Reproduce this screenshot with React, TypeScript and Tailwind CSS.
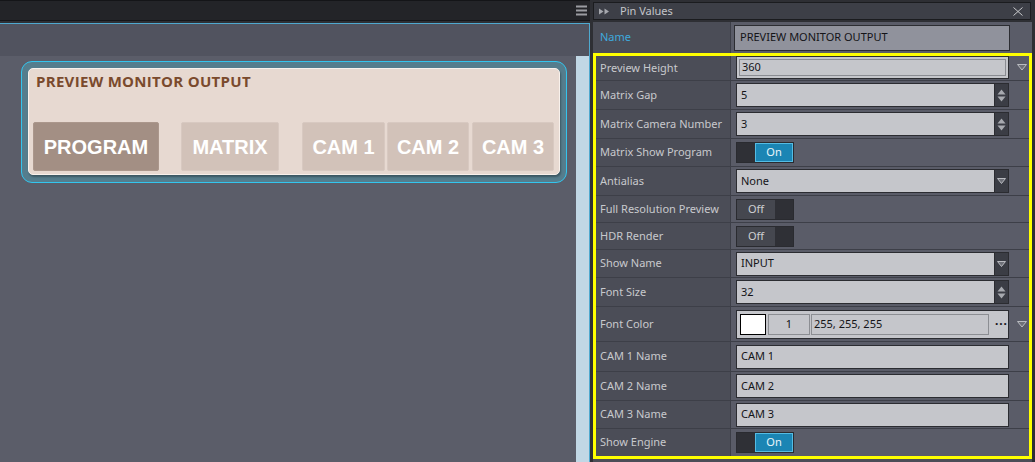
import React from "react";

type Row =
  | { label: string; h: string; kind: "combo" | "spin" | "select" | "text"; value: string }
  | { label: string; h: string; kind: "toggle"; on: boolean }
  | { label: string; h: string; kind: "color" };

const ROWS: Row[] = [
  { label: "Preview Height", h: "h-[25px]", kind: "combo", value: "360" },
  { label: "Matrix Gap", h: "h-[29px]", kind: "spin", value: "5" },
  { label: "Matrix Camera Number", h: "h-[29px]", kind: "spin", value: "3" },
  { label: "Matrix Show Program", h: "h-[28px]", kind: "toggle", on: true },
  { label: "Antialias", h: "h-[29px]", kind: "select", value: "None" },
  { label: "Full Resolution Preview", h: "h-[27px]", kind: "toggle", on: false },
  { label: "HDR Render", h: "h-[27px]", kind: "toggle", on: false },
  { label: "Show Name", h: "h-[28px]", kind: "select", value: "INPUT" },
  { label: "Font Size", h: "h-[29px]", kind: "spin", value: "32" },
  { label: "Font Color", h: "h-[35px]", kind: "color" },
  { label: "CAM 1 Name", h: "h-[30px]", kind: "text", value: "CAM 1" },
  { label: "CAM 2 Name", h: "h-[29px]", kind: "text", value: "CAM 2" },
  { label: "CAM 3 Name", h: "h-[28px]", kind: "text", value: "CAM 3" },
  { label: "Show Engine", h: "h-[27px]", kind: "toggle", on: true },
];

function DownArrow() {
  return (
    <svg width="10" height="7" viewBox="0 0 10 7">
      <polygon points="0.5,0.5 9.5,0.5 5,6" fill="#6e7078" stroke="#b9bbc0" />
    </svg>
  );
}

function SpinArrows() {
  return (
    <svg width="9" height="15" viewBox="0 0 9 15">
      <polygon points="0.5,6.5 4.5,1.5 8.5,6.5" fill="#a7a9af" />
      <polygon points="0.5,8.5 4.5,13.5 8.5,8.5" fill="#a7a9af" />
    </svg>
  );
}

function Toggle({ on }: { on: boolean }) {
  return (
    <div className="flex h-[21px] w-[58px] border border-[#2a2b30] text-[11px]">
      {on ? (
        <>
          <div className="w-[18px] bg-[#2f3036]" />
          <div className="flex flex-1 items-center justify-center border border-[#55bce4] bg-[#1b85b4] text-[#e9f5fb]">
            On
          </div>
        </>
      ) : (
        <>
          <div className="flex w-[38px] items-center justify-center bg-[#45474f] text-[#cfd0d3]">Off</div>
          <div className="flex-1 bg-[#2f3036]" />
        </>
      )}
    </div>
  );
}

function Value({ row }: { row: Row }) {
  const box = "flex h-[24px] w-[273px] items-center border border-[#2b2c31] bg-[#c5c6cb] text-[11px] text-[#141418]";
  if (row.kind === "toggle") return <Toggle on={row.on} />;
  if (row.kind === "color") {
    return (
      <div className="flex items-center">
        <div className="flex h-[29px] w-[273px] items-center border border-[#2b2c31] bg-[#c5c6cb] pl-[3px] text-[11px] text-[#141418]">
          <div className="h-[21px] w-[26px] border border-black bg-white" />
          <div className="ml-[2px] flex h-[21px] w-[42px] items-center justify-center border border-[#8c8e93]">1</div>
          <div className="ml-[1px] flex h-[21px] w-[178px] items-center border border-[#8c8e93] pl-[2px]">
            255, 255, 255
          </div>
          <div className="ml-[6px] text-[12px] font-bold leading-none tracking-[1px]">···</div>
        </div>
        <div className="ml-[8px] flex items-center">
          <DownArrow />
        </div>
      </div>
    );
  }
  if (row.kind === "combo") {
    return (
      <div className="flex items-center self-start">
        <div className="flex h-[23px] w-[273px] items-center border border-[#2b2c31] bg-[#c5c6cb] px-[2px]">
          <div className="flex h-[17px] w-full items-center border border-[#8a8c92] pl-[2px] text-[11px] text-[#141418]">
            {row.value}
          </div>
        </div>
        <div className="ml-[8px] flex items-center">
          <DownArrow />
        </div>
      </div>
    );
  }
  return (
    <div className={box}>
      <span className="flex-1 pl-[4px]">{row.value}</span>
      {row.kind === "spin" && (
        <div className="flex h-full w-[14px] items-center justify-center border-l border-[#2b2c31] bg-[#3b3d45]">
          <SpinArrows />
        </div>
      )}
      {row.kind === "select" && (
        <div className="flex h-full w-[14px] items-center justify-center border-l border-[#2b2c31] bg-[#3b3d45]">
          <svg width="9" height="6" viewBox="0 0 9 6">
            <polygon points="0.5,0.5 8.5,0.5 4.5,5.5" fill="#6e7078" stroke="#b9bbc0" />
          </svg>
        </div>
      )}
    </div>
  );
}

function CamButton({ label, w, active }: { label: string; w: string; active?: boolean }) {
  return (
    <div
      className={`flex h-[49px] ${w} items-center justify-center rounded-[2px] border text-[20px] font-bold text-white ${
        active ? "border-[#ab978c] bg-[#a38f84]" : "border-[#d8c9c1] bg-[#d2c2b9]"
      }`}
      style={{ fontFamily: '"Liberation Sans", Arial, sans-serif' }}
    >
      {label}
    </div>
  );
}

export default function App() {
  return (
    <div
      className="flex h-[462px] w-[1035px] overflow-hidden bg-[#2e2f34]"
      style={{ fontFamily: '"Noto Sans", "DejaVu Sans", sans-serif' }}
    >
      {/* left: canvas */}
      <div className="flex w-[590px] flex-col">
        <div className="flex h-[21px] items-center justify-end border-y border-[#141518] bg-[#232428] pr-[3px]">
          <svg width="11" height="11" viewBox="0 0 11 11">
            <rect x="0" y="0.5" width="11" height="2" fill="#9b9ca1" />
            <rect x="0" y="4.5" width="11" height="2" fill="#9b9ca1" />
            <rect x="0" y="8.5" width="11" height="2" fill="#9b9ca1" />
          </svg>
        </div>
        <div className="mt-[2px] flex flex-1 flex-col border-r border-t border-[#4fa9cf]">
          <div className="h-[32px] bg-[#51535f]" />
          <div className="flex flex-1">
            <div className="flex-1 bg-[#5b5d69] pl-[21px] pt-[5px]">
              <div className="h-[122px] w-[546px] rounded-[11px] border border-[#33c5ee] bg-[#557d8d] pl-[6px] pt-[6px]">
                <div className="flex h-[107px] w-[532px] flex-col justify-between rounded-[5px] border border-[#f8f1ec] bg-[#e7d9d1] pb-[3px] shadow-[1px_2px_2px_rgba(0,0,0,0.3)]">
                  <div
                    className="pl-[7px] pt-[2px] text-[15px] font-bold leading-[20px] tracking-[0.3px] text-[#7a4a2d]"
                    style={{ fontFamily: '"Open Sans", sans-serif' }}
                  >
                    PREVIEW MONITOR OUTPUT
                  </div>
                  <div className="flex pl-[4px]">
                    <CamButton label="PROGRAM" w="w-[126px]" active />
                    <div className="ml-[22px]">
                      <CamButton label="MATRIX" w="w-[98px]" />
                    </div>
                    <div className="ml-[23px]">
                      <CamButton label="CAM 1" w="w-[83px]" />
                    </div>
                    <div className="ml-[2px]">
                      <CamButton label="CAM 2" w="w-[82px]" />
                    </div>
                    <div className="ml-[3px]">
                      <CamButton label="CAM 3" w="w-[82px]" />
                    </div>
                  </div>
                </div>
              </div>
            </div>
            <div className="w-[13px] bg-[#c1d7e5]" />
          </div>
        </div>
      </div>

      {/* right: pin values */}
      <div className="ml-[3px] flex w-[442px] flex-col">
        <div className="mt-[2px] flex h-[18px] w-[438px] items-center border border-[#1b1c1f] bg-[#3d3f47] pl-[5px] pr-[7px]">
          <svg width="11" height="7" viewBox="0 0 11 7">
            <polygon points="0,0.5 4.5,3.5 0,6.5" fill="#a6a8ae" />
            <polygon points="5.5,0.5 10,3.5 5.5,6.5" fill="#a6a8ae" />
          </svg>
          <span className="ml-[10px] text-[11px] text-[#c4c5c9]">Pin Values</span>
          <svg className="ml-auto" width="10" height="9" viewBox="0 0 10 9">
            <path d="M0.5 0.5 L9.5 8.5 M9.5 0.5 L0.5 8.5" stroke="#c8c9cc" strokeWidth="1" />
          </svg>
        </div>
        <div className="mt-[2px] flex w-[439px] flex-1 flex-col bg-[#4b4d57]">
          <div className="flex h-[31px]">
            <div className="flex w-[138px] items-center border-r border-[#3d3f48] pl-[7px] text-[11px] text-[#3ea9dc]">
              Name
            </div>
            <div className="flex flex-1 items-center bg-[#5a5c68] pl-[3px]">
              <div className="flex h-[26px] w-[276px] items-center border border-[#2c2d32] bg-[#90929c] pl-[5px] text-[11px] text-[#141418]">
                PREVIEW MONITOR OUTPUT
              </div>
            </div>
          </div>
          <div className="h-[406px] border-[3px] border-[#ffff00]">
            {ROWS.map((r) => (
              <div key={r.label} className={`flex ${r.h} border-b border-[#3d3f48] last:border-b-0`}>
                <div className="flex w-[135px] items-center border-r border-[#3d3f48] bg-[#4b4d57] pl-[4px] text-[11px] text-[#c8c9cd]">
                  {r.label}
                </div>
                <div className="flex flex-1 items-center bg-[#5a5c68] pl-[5px]">
                  <Value row={r} />
                </div>
              </div>
            ))}
          </div>
        </div>
      </div>
    </div>
  );
}
